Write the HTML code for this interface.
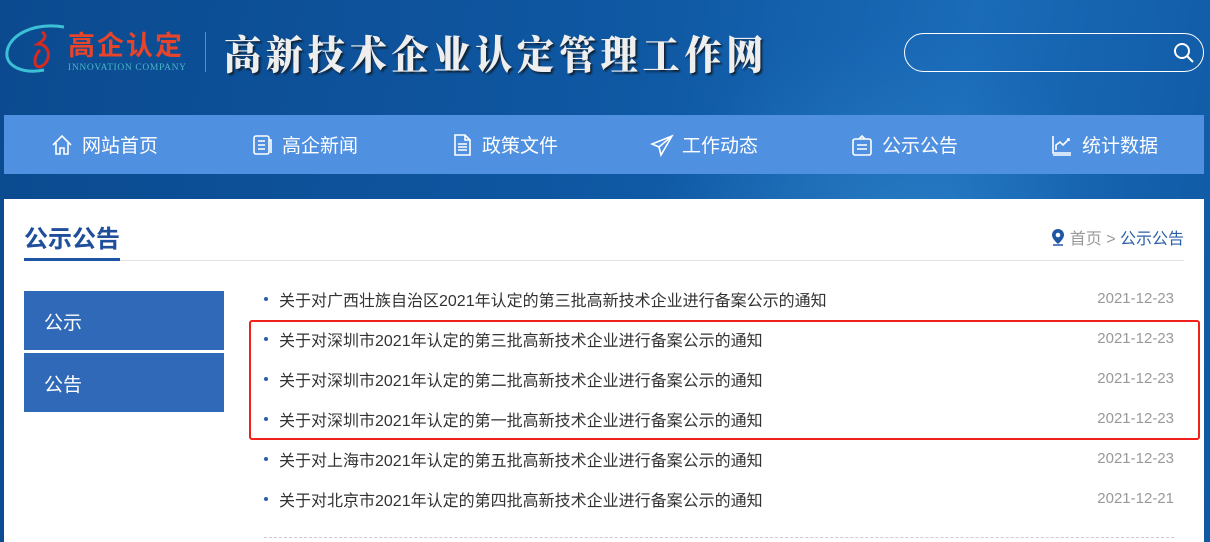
<!DOCTYPE html>
<html><head><meta charset="utf-8"><style>
*{margin:0;padding:0;box-sizing:border-box}
body{width:1210px;height:542px;overflow:hidden;font-family:"Liberation Sans","Noto Sans CJK SC",sans-serif;background:linear-gradient(100deg,#0b4a8f 0%,#0f58a3 50%,#1a6bb8 75%,#0f58a3 100%);position:relative}
.glow{position:absolute;left:650px;top:20px;width:480px;height:480px;border-radius:50%;background:radial-gradient(circle,rgba(70,160,220,.35),rgba(40,120,200,.1) 60%,transparent 70%)}
.logo{position:absolute;left:4px;top:20px}
.title{position:absolute;left:224px;top:24px;font-family:"Noto Serif CJK SC",serif;font-weight:900;font-size:40px;letter-spacing:5px;color:#eee;text-shadow:2px 2px 2px #123;transform:scaleX(0.93);transform-origin:left}
.sep{position:absolute;left:205px;top:32px;width:1px;height:40px;background:rgba(255,255,255,.35)}
.search{position:absolute;left:904px;top:33px;width:300px;height:39px;border:1.5px solid #fff;border-radius:20px}
.nav{position:absolute;left:4px;top:115px;width:1200px;height:59px;background:#4f90e0;display:flex}
.nav div{flex:1;display:flex;align-items:center;justify-content:center;color:#fff;font-size:19px;gap:8px}
.nav svg{width:24px;height:24px;fill:none;stroke:#fff;stroke-width:1.6}
.panel{position:absolute;left:4px;top:199px;width:1200px;height:343px;background:#fff}
h2{position:absolute;left:24px;top:219px;font-size:24px;color:#1f4e9a;font-weight:bold}
.ul1{position:absolute;left:24px;top:258px;width:96px;height:3px;background:#1f55a5}
.ul2{position:absolute;left:120px;top:260px;width:1064px;height:1px;background:#e2e2e2}
.bc{position:absolute;right:26px;top:225px;font-size:16px;color:#999}
.bc b{font-weight:normal;color:#2b5fa8}
.side{position:absolute;left:24px;width:200px;height:59px;background:#2f69b7;color:#fff;font-size:19px;padding:17px 0 0 20px}
.item{position:absolute;left:264px;width:910px;font-size:16px;color:#333;height:20px}
.item:before{content:"";position:absolute;left:0;top:10px;width:4px;height:4px;border-radius:50%;background:#2a60a8}
.item span{position:absolute;left:15px;top:0;white-space:nowrap}
.item i{position:absolute;right:0;top:3px;font-style:normal;color:#999;font-size:15px}
.red{position:absolute;left:249px;top:320px;width:951px;height:120px;border:2.5px solid #f0201a;border-radius:3px}
.dash{position:absolute;left:264px;top:537px;width:910px;border-top:1px dashed #ccc}
</style></head><body>
<div class="glow"></div>
<svg class="logo" width="190" height="60" viewBox="0 0 190 60">
<path d="M60 7 C30 2 5 15 3 32 C1 47 20 54 40 50" fill="none" stroke="#3cc0d6" stroke-width="3"/>
<path d="M38 12 C44 16 40 20 34 24 C46 24 48 40 38 46 C30 50 28 38 36 30" fill="none" stroke="#d52a1f" stroke-width="3"/>
<text x="64" y="35" font-size="27" font-weight="bold" fill="#e8442a" font-family="Noto Sans CJK SC,sans-serif" letter-spacing="2">高企认定</text>
<text x="64" y="50" font-size="9.5" fill="#49b6c8" font-family="Liberation Serif,serif" textLength="118">INNOVATION COMPANY</text>
</svg>
<div class="sep"></div>
<div class="title">高新技术企业认定管理工作网</div>
<div class="search"><svg style="position:absolute;right:8px;top:8px" width="22" height="22" viewBox="0 0 22 22"><circle cx="9" cy="9" r="7" fill="none" stroke="#fff" stroke-width="2"/><path d="M14 14l6 6" stroke="#fff" stroke-width="2"/></svg></div>
<div class="nav">
<div><svg viewBox="0 0 24 24"><path d="M3 12L12 3l9 9M6 10v11h4v-6h4v6h4V10"/></svg>网站首页</div>
<div><svg viewBox="0 0 24 24"><rect x="4" y="3" width="15" height="18" rx="2"/><path d="M8 8h7M8 12h7M8 16h7M19 7h2v13"/></svg>高企新闻</div>
<div><svg viewBox="0 0 24 24"><path d="M5 2h10l5 5v15H5zM15 2v5h5M8 11h9M8 14h9M8 17h9"/></svg>政策文件</div>
<div><svg viewBox="0 0 24 24"><path d="M22 3L2 11l7 3 2 8zM22 3L9 14"/></svg>工作动态</div>
<div><svg viewBox="0 0 24 24"><rect x="3" y="6" width="18" height="16" rx="2"/><path d="M9 6l3-3 3 3M7 12h10M7 16h10"/></svg>公示公告</div>
<div><svg viewBox="0 0 24 24"><path d="M3 3v17h18M3 22h18M6 17v-5l4-3 3 3 6-6M17 6h2v2"/></svg>统计数据</div>
</div>
<div class="panel"></div>
<h2>公示公告</h2>
<div class="ul2"></div><div class="ul1"></div>
<div class="bc"><svg width="14" height="18" viewBox="0 0 14 18" style="vertical-align:-2px"><path d="M7 1a6 6 0 0 0-6 6c0 4 6 9 6 9s6-5 6-9a6 6 0 0 0-6-6z" fill="#1f55a5"/><circle cx="7" cy="7" r="2.3" fill="#fff"/><path d="M2 17h10" stroke="#1f55a5" stroke-width="1.5"/></svg> 首页 &gt; <b>公示公告</b></div>
<div class="side" style="top:291px">公示</div>
<div class="side" style="top:353px">公告</div>
<div class="item" style="top:287px"><span>关于对广西壮族自治区2021年认定的第三批高新技术企业进行备案公示的通知</span><i>2021-12-23</i></div>
<div class="item" style="top:327px"><span>关于对深圳市2021年认定的第三批高新技术企业进行备案公示的通知</span><i>2021-12-23</i></div>
<div class="item" style="top:367px"><span>关于对深圳市2021年认定的第二批高新技术企业进行备案公示的通知</span><i>2021-12-23</i></div>
<div class="item" style="top:407px"><span>关于对深圳市2021年认定的第一批高新技术企业进行备案公示的通知</span><i>2021-12-23</i></div>
<div class="item" style="top:447px"><span>关于对上海市2021年认定的第五批高新技术企业进行备案公示的通知</span><i>2021-12-23</i></div>
<div class="item" style="top:487px"><span>关于对北京市2021年认定的第四批高新技术企业进行备案公示的通知</span><i>2021-12-21</i></div>
<div class="red"></div>
<div class="dash"></div>
</body></html>
